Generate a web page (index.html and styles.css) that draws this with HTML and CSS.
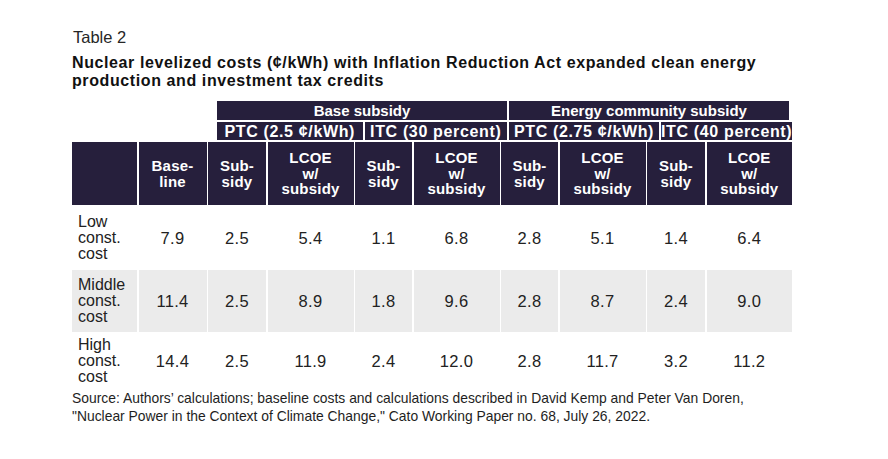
FILE: index.html
```html
<!DOCTYPE html>
<html lang="en">
<head>
<meta charset="utf-8">
<title>Table 2</title>
<link rel="stylesheet" href="styles.css">
</head>
<body>
<div class="page">
  <p class="label">Table 2</p>
  <h1 class="title">Nuclear levelized costs (¢/kWh) with Inflation Reduction Act expanded clean energy<br>production and investment tax credits</h1>
  <div class="table">
    <div class="band-row">
      <div class="band band-base">Base subsidy</div>
      <div class="band band-energy">Energy community subsidy</div>
    </div>
    <div class="sub-row">
      <div class="sub sub-1">PTC (2.5 ¢/kWh)</div>
      <div class="sub sub-2">ITC (30 percent)</div>
      <div class="sub sub-3">PTC (2.75 ¢/kWh)</div>
      <div class="sub sub-4">ITC (40 percent)</div>
    </div>
    <div class="grid">
      <div class="hd"></div>
      <div class="hd">Base-<br>line</div>
      <div class="hd">Sub-<br>sidy</div>
      <div class="hd">LCOE<br>w/<br>subsidy</div>
      <div class="hd">Sub-<br>sidy</div>
      <div class="hd">LCOE<br>w/<br>subsidy</div>
      <div class="hd">Sub-<br>sidy</div>
      <div class="hd">LCOE<br>w/<br>subsidy</div>
      <div class="hd">Sub-<br>sidy</div>
      <div class="hd">LCOE<br>w/<br>subsidy</div>

      <div class="rl">Low<br>const.<br>cost</div>
      <div class="c">7.9</div><div class="c">2.5</div><div class="c">5.4</div><div class="c">1.1</div><div class="c">6.8</div><div class="c">2.8</div><div class="c">5.1</div><div class="c">1.4</div><div class="c">6.4</div>

      <div class="rl alt">Middle<br>const.<br>cost</div>
      <div class="c alt">11.4</div><div class="c alt">2.5</div><div class="c alt">8.9</div><div class="c alt">1.8</div><div class="c alt">9.6</div><div class="c alt">2.8</div><div class="c alt">8.7</div><div class="c alt">2.4</div><div class="c alt">9.0</div>

      <div class="rl">High<br>const.<br>cost</div>
      <div class="c">14.4</div><div class="c">2.5</div><div class="c">11.9</div><div class="c">2.4</div><div class="c">12.0</div><div class="c">2.8</div><div class="c">11.7</div><div class="c">3.2</div><div class="c">11.2</div>
    </div>
  </div>
  <p class="source">Source: Authors’ calculations; baseline costs and calculations described in David Kemp and Peter Van Doren,<br>"Nuclear Power in the Context of Climate Change," Cato Working Paper no. 68, July 26, 2022.</p>
</div>
</body>
</html>
```

FILE: styles.css
```css
html, body {
  margin: 0;
  padding: 0;
  background: #ffffff;
}

.page {
  padding: 28px 0 0 72px;
  font-family: "Liberation Sans", Arial, sans-serif;
  color: #1e1e1e;
}

.label {
  margin: 0 0 0 1px;
  font-size: 16.5px;
  line-height: 18px;
  color: #262626;
}

.title {
  margin: 8px 0 0 0;
  font-size: 16px;
  line-height: 18px;
  letter-spacing: 0.6px;
  font-weight: bold;
  color: #111111;
}

.table {
  margin-top: 11px;
}

.band-row,
.sub-row {
  display: flex;
  gap: 2px;
  margin-left: 145px;
  margin-bottom: 2px;
}

.band,
.sub {
  background: #261f3c;
  color: #ffffff;
  font-weight: bold;
  text-align: center;
  height: 18.5px;
  line-height: 19px;
  white-space: nowrap;
  overflow: hidden;
}

.band {
  font-size: 15px;
}

.band-base { width: 290px; }
.band-energy { width: 280px; }

.sub {
  font-size: 16px;
  letter-spacing: 0.65px;
}

.sub-1 { width: 145.5px; }
.sub-2 { width: 142.5px; }
.sub-3 { width: 150px; }
.sub-4 { width: 131px; }

.grid {
  display: grid;
  grid-template-columns: 65px 68px 58px 86px 57px 86px 57px 86px 58px 85.5px;
  grid-template-rows: 63px 62px 62px 55px;
  column-gap: 1.5px;
  row-gap: 1.5px;
  width: 720px;
}

.hd {
  background: #261f3c;
  color: #ffffff;
  font-weight: bold;
  font-size: 15px;
  line-height: 15.5px;
  letter-spacing: 0.2px;
  display: flex;
  align-items: center;
  justify-content: center;
  text-align: center;
}

.rl,
.c {
  line-height: 16px;
  color: #222222;
  display: flex;
  align-items: center;
}

.rl {
  font-size: 16px;
  padding-left: 6px;
}

.c {
  font-size: 16.5px;
  letter-spacing: 0.3px;
  justify-content: center;
}

.alt {
  background: #ebebeb;
}

.source {
  margin: 0;
  font-size: 15px;
  line-height: 18px;
  color: #1e1e1e;
  white-space: nowrap;
  transform: scaleX(0.925);
  transform-origin: left top;
}
```
